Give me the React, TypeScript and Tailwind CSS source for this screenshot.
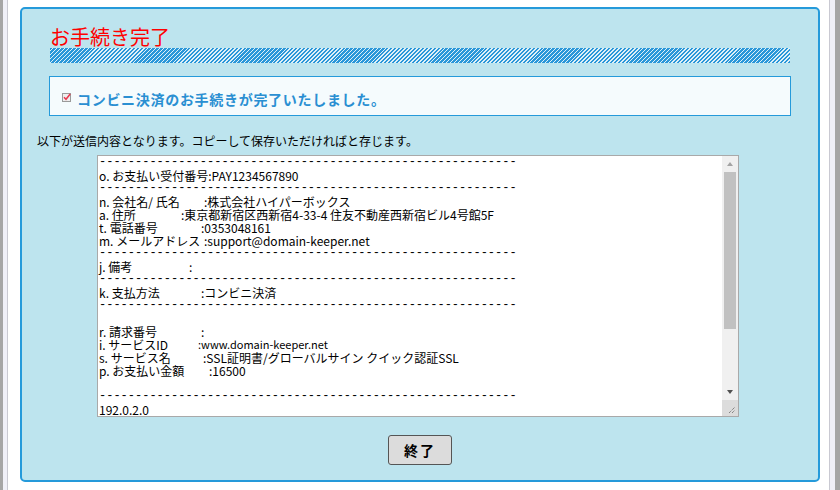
import type { FC } from 'react';

type Row =
  | { kind: 'dash' }
  | { kind: 'blank' }
  | { kind: 'text'; text: string }
  | { kind: 'field'; label: string; w?: number; value: string; small?: boolean };

const DASH = '-'.repeat(58);

// Contents of the read-only "textarea" (sent form data), one entry per line.
const rows: Row[] = [
  { kind: 'dash' },
  { kind: 'field', label: 'o. お支払い受付番号', value: ':PAY1234567890' },
  { kind: 'dash' },
  { kind: 'field', label: 'n. 会社名/ 氏名', w: 105, value: ':株式会社ハイパーボックス' },
  { kind: 'field', label: 'a. 住所', w: 82, value: ':東京都新宿区西新宿4-33-4 住友不動産西新宿ビル4号館5F' },
  { kind: 'field', label: 't. 電話番号', w: 102, value: ':0353048161' },
  { kind: 'field', label: 'm. メールアドレス', w: 105, value: ':support@domain-keeper.net' },
  { kind: 'dash' },
  { kind: 'field', label: 'j. 備考', w: 90, value: ':' },
  { kind: 'dash' },
  { kind: 'field', label: 'k. 支払方法', w: 102, value: ':コンビニ決済' },
  { kind: 'dash' },
  { kind: 'blank' },
  { kind: 'field', label: 'r. 請求番号', w: 102, value: ':' },
  { kind: 'field', label: 'i. サービスID', w: 99, value: ':www.domain-keeper.net', small: true },
  { kind: 'field', label: 's. サービス名', w: 104, value: ':SSL証明書/グローバルサイン クイック認証SSL' },
  { kind: 'field', label: 'p. お支払い金額', w: 110, value: ':16500' },
  { kind: 'blank' },
  { kind: 'dash' },
  { kind: 'text', text: '192.0.2.0' },
];

const Line: FC<{ row: Row }> = ({ row }) => {
  if (row.kind === 'dash') {
    return <div className="h-[13px] font-['Liberation_Mono',monospace] text-[12px] leading-[13px]">{DASH}</div>;
  }
  if (row.kind === 'blank') return <div className="h-[13px]" />;
  if (row.kind === 'text') return <div className="h-[13px]">{row.text}</div>;
  return (
    <div className="flex h-[13px]">
      <span className="shrink-0" style={row.w ? { width: row.w } : undefined}>
        {row.label}
      </span>
      <span className={row.small ? 'text-[11px]' : ''}>{row.value}</span>
    </div>
  );
};

const CheckIcon: FC = () => (
  <svg width="9" height="9" viewBox="0 0 9 9" className="mt-[3px] shrink-0">
    <rect x="0.5" y="0.5" width="8" height="8" fill="#eeeeee" stroke="#9a9a9a" />
    <path d="M2 4.2 L4 6.3 L8.2 1" fill="none" stroke="#e8384f" strokeWidth="1.5" />
  </svg>
);

const Scrollbar: FC = () => (
  <div className="flex w-[16px] shrink-0 flex-col bg-[#f0f0f0]">
    <div className="flex h-[16px] items-center justify-center">
      <div className="h-0 w-0 border-x-[3.5px] border-b-[4px] border-x-transparent border-b-[#a3a3a3]" />
    </div>
    <div className="flex-1 px-[2px]">
      <div className="h-[157px] bg-[#c1c1c1]" />
    </div>
    <div className="flex h-[16px] items-center justify-center">
      <div className="h-0 w-0 border-x-[3.5px] border-t-[4px] border-x-transparent border-t-[#505050]" />
    </div>
    <div className="flex h-[16px] items-end justify-end bg-[#dcdcdc] p-[2px]">
      <svg width="8" height="8" viewBox="0 0 8 8">
        <path d="M1 7 L7 1 M4 7 L7 4" stroke="#606060" strokeWidth="1" strokeDasharray="1 1" />
      </svg>
    </div>
  </div>
);

export default function App() {
  return (
    <div className="flex h-[490px] w-[840px] overflow-hidden bg-white font-['Noto_Sans_CJK_JP',sans-serif] text-black">
      <div className="w-[3px] shrink-0 bg-[#a6a6a6]" />
      <div className="w-[4px] shrink-0 bg-[#f0f0f8]" />
      <div className="w-px shrink-0 bg-[#c9c9d2]" />

      <div className="flex-1 pl-[12px] pt-[7px]">
        <div className="flex h-[475px] w-[800px] flex-col rounded-[5px] border-2 border-[#259ada] bg-[#bde4ee]">
          <h1 className="ml-[28px] mt-[16px] h-[23px] text-[20px] font-normal leading-[23px] text-[#ff0000]">
            お手続き完了
          </h1>
          <div className="ml-[28px] h-[15px] w-[740px] bg-[repeating-linear-gradient(135deg,#2a97d9_0px,#2a97d9_1.7px,#dff0f7_1.7px,#dff0f7_2.8px)]" />

          <div className="ml-[27px] mt-[13px] flex h-[40px] w-[742px] items-start gap-[6px] border border-[#259ada] bg-[#f5fbfd] pl-[12px] pt-[13px]">
            <CheckIcon />
            <p className="text-[14px] font-bold leading-[18px] tracking-[0.7px] text-[#2a8fd2]">
              コンビニ決済のお手続きが完了いたしました。
            </p>
          </div>

          <p className="ml-[15px] mt-[17px] text-[12px] leading-[16px]">
            以下が送信内容となります。コピーして保存いただければと存じます。
          </p>

          <div className="ml-[75px] mt-[6px] flex h-[262px] w-[642px] border border-[#a9a9a9] bg-white">
            <div className="flex-1 overflow-hidden whitespace-pre pl-px text-[12px] leading-[13px]">
              {rows.map((row, i) => (
                <Line key={i} row={row} />
              ))}
            </div>
            <Scrollbar />
          </div>

          <button className="mx-auto mt-[18px] h-[30px] w-[64px] rounded-[3px] border border-[#555555] bg-[#dcdcdc] text-[14px] font-bold tracking-[2px] text-black">
            終了
          </button>
        </div>
      </div>

      <div className="w-px shrink-0 bg-[#c9c9d2]" />
      <div className="w-[5px] shrink-0 bg-[#f0f0f8]" />
      <div className="w-[5px] shrink-0 bg-[#a6a6a6]" />
    </div>
  );
}
